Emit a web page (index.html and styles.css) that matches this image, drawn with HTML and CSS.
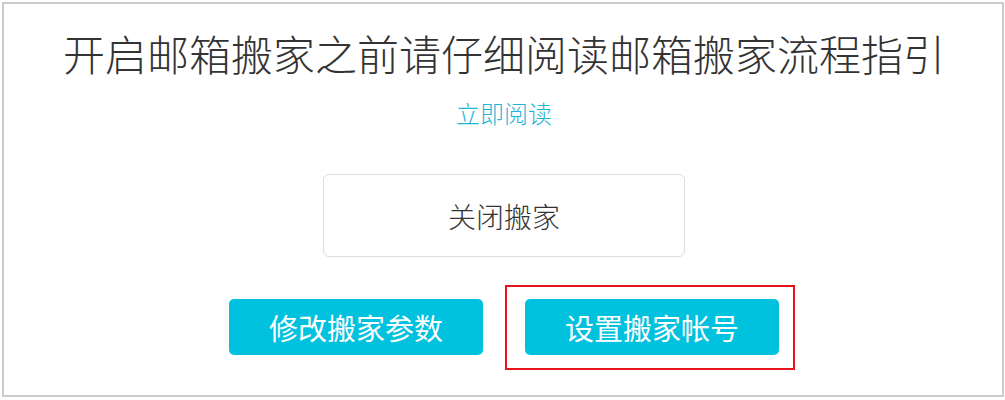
FILE: index.html
```html
<!DOCTYPE html>
<html lang="zh-CN">
<head>
    <meta charset="UTF-8">
    <title>邮箱搬家</title>
    <link rel="stylesheet" href="styles.css">
</head>
<body>

<div class="panel">
    <h2 class="title">开启邮箱搬家之前请仔细阅读邮箱搬家流程指引</h2>
    <a class="guide-link" href="#">立即阅读</a>

    <button class="btn-close" type="button">关闭搬家</button>

    <div class="actions">
        <button class="btn-primary" type="button">修改搬家参数</button>
        <button class="btn-primary marked" type="button">设置搬家帐号</button>
    </div>
</div>

</body>
</html>
```

FILE: styles.css
```css
body {
    margin: 0;
    font-family: "Liberation Sans", "Noto Sans CJK SC", sans-serif;
    background: #fff;
}

.panel {
    margin: 2px 1px 2px 2px;
    height: 395px;
    border: 2px solid #cccccc;
    display: flex;
    flex-direction: column;
    align-items: center;
    padding-top: 28px;
    padding-left: 2px;
    box-sizing: border-box;
}

.title {
    margin: 0;
    font-size: 42px;
    line-height: 50px;
    font-weight: 300;
    color: #333;
}

.guide-link {
    margin-top: 18px;
    font-size: 24px;
    line-height: 30px;
    font-weight: 300;
    color: #1cb6d6;
    text-decoration: none;
}

.btn-close {
    margin-top: 44px;
    width: 362px;
    height: 83px;
    background: #fff;
    border: 1px solid #dddddd;
    border-radius: 6px;
    font-family: inherit;
    font-size: 28px;
    font-weight: 300;
    color: #333;
}

.actions {
    margin-top: 42px;
    display: flex;
    gap: 42px;
}

.btn-primary {
    width: 254px;
    height: 56px;
    background: #00c1de;
    border: none;
    border-radius: 5px;
    font-family: inherit;
    font-size: 29px;
    color: #fff;
    cursor: pointer;
}

/* red annotation frame */
.marked {
    position: relative;
}

.marked::after {
    content: "";
    position: absolute;
    top: -14px;
    bottom: -15px;
    left: -20px;
    right: -16px;
    border: 2px solid #e8141c;
}
```
